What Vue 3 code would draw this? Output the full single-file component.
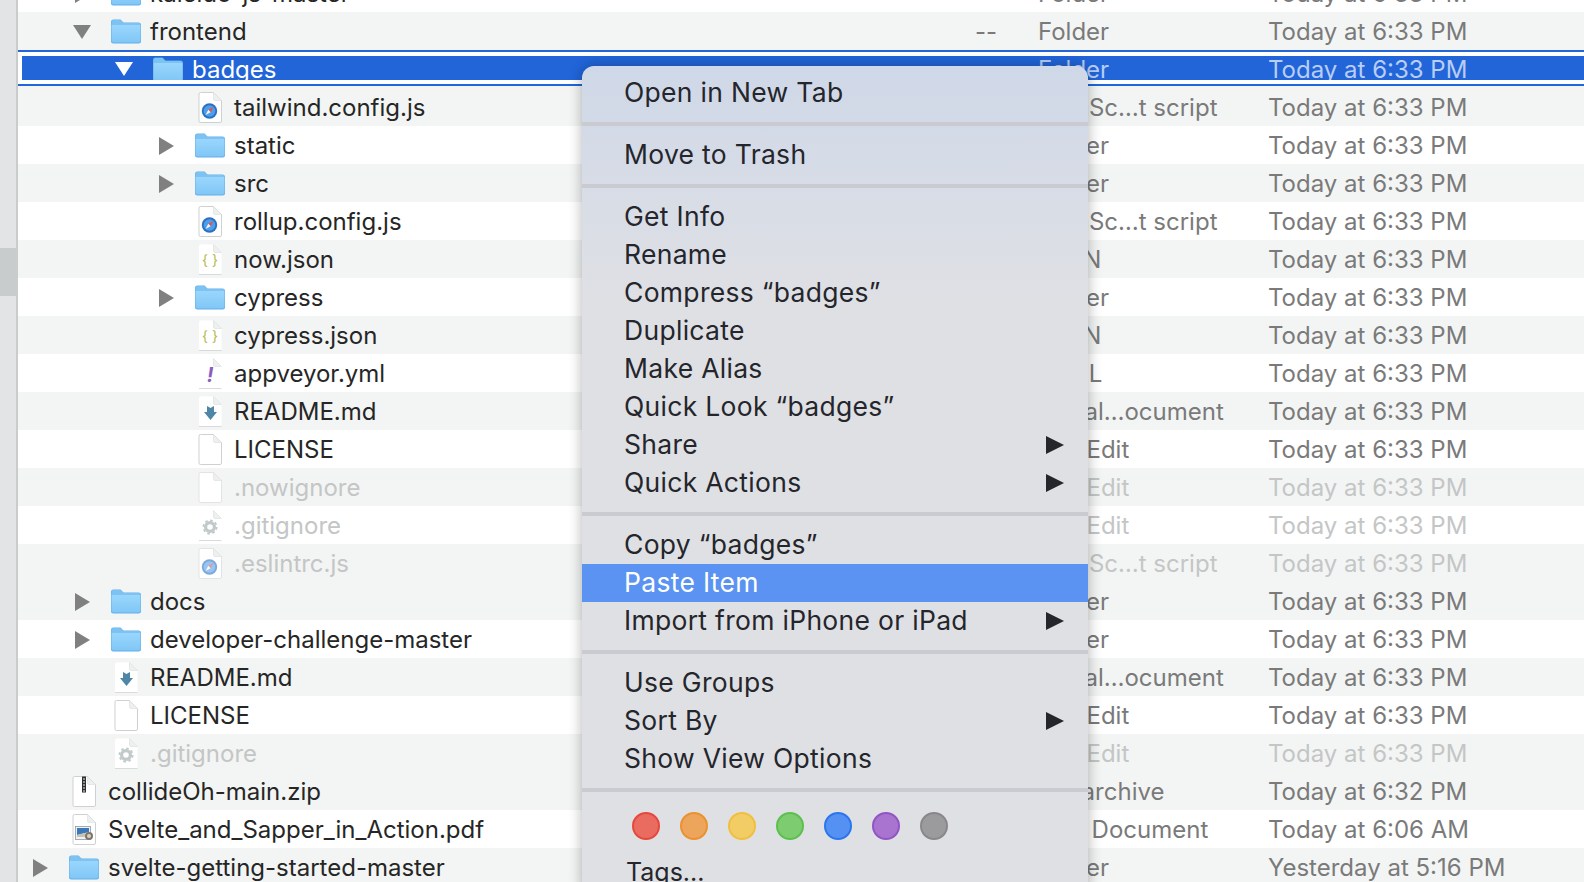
<script setup>
const F = "Today at 6:33 PM";

const rows = [
  { name: "kaleido-js-master", level: 1, icon: "folder", tri: "right", size: "--", kind: "Folder", date: F },
  { name: "frontend", level: 1, icon: "folder", tri: "down", size: "--", kind: "Folder", date: F, alt: true },
  { name: "badges", level: 2, icon: "folder", tri: "down", size: "--", kind: "Folder", date: F, selected: true },
  { name: "tailwind.config.js", level: 3, icon: "js", head: "Java", kind: "Sc…t script", date: F, alt: true, afterSel: true },
  { name: "static", level: 3, icon: "folder", tri: "right", size: "--", kind: "Folder", date: F },
  { name: "src", level: 3, icon: "folder", tri: "right", size: "--", kind: "Folder", date: F, alt: true },
  { name: "rollup.config.js", level: 3, icon: "js", head: "Java", kind: "Sc…t script", date: F },
  { name: "now.json", level: 3, icon: "json", head: "JSO", kind: "N", date: F, alt: true },
  { name: "cypress", level: 3, icon: "folder", tri: "right", size: "--", kind: "Folder", date: F },
  { name: "cypress.json", level: 3, icon: "json", head: "JSO", kind: "N", date: F, alt: true },
  { name: "appveyor.yml", level: 3, icon: "yml", head: "YAM", kind: "L", date: F },
  { name: "README.md", level: 3, icon: "md", head: "Visu", kind: "al…ocument", date: F, alt: true },
  { name: "LICENSE", level: 3, icon: "plain", kind: "TextEdit", date: F },
  { name: ".nowignore", level: 3, icon: "plain", kind: "TextEdit", date: F, alt: true, hidden: true },
  { name: ".gitignore", level: 3, icon: "gear", kind: "TextEdit", date: F, hidden: true },
  { name: ".eslintrc.js", level: 3, icon: "js", head: "Java", kind: "Sc…t script", date: F, alt: true, hidden: true },
  { name: "docs", level: 1, icon: "folder", tri: "right", size: "--", kind: "Folder", date: F, alt: true },
  { name: "developer-challenge-master", level: 1, icon: "folder", tri: "right", size: "--", kind: "Folder", date: F },
  { name: "README.md", level: 1, icon: "md", head: "Visu", kind: "al…ocument", date: F, alt: true },
  { name: "LICENSE", level: 1, icon: "plain", kind: "TextEdit", date: F },
  { name: ".gitignore", level: 1, icon: "gear", kind: "TextEdit", date: F, alt: true, hidden: true },
  { name: "collideOh-main.zip", level: 0, icon: "zip", kind: "ZIP archive", date: "Today at 6:32 PM", alt: true },
  { name: "Svelte_and_Sapper_in_Action.pdf", level: 0, icon: "pdf", kind: "PDF Document", date: "Today at 6:06 AM" },
  { name: "svelte-getting-started-master", level: 0, icon: "folder", tri: "right", size: "--", kind: "Folder", date: "Yesterday at 5:16 PM", alt: true },
];

const menu = [
  [{ label: "Open in New Tab" }],
  [{ label: "Move to Trash" }],
  [
    { label: "Get Info" },
    { label: "Rename" },
    { label: "Compress “badges”" },
    { label: "Duplicate" },
    { label: "Make Alias" },
    { label: "Quick Look “badges”" },
    { label: "Share", sub: true },
    { label: "Quick Actions", sub: true },
  ],
  [
    { label: "Copy “badges”" },
    { label: "Paste Item", active: true },
    { label: "Import from iPhone or iPad", sub: true },
  ],
  [
    { label: "Use Groups" },
    { label: "Sort By", sub: true },
    { label: "Show View Options" },
  ],
];

const tags = [
  { fill: "#ea6b60", line: "#e5483c" },
  { fill: "#eda55b", line: "#ea9130" },
  { fill: "#f2cd66", line: "#f1bf3f" },
  { fill: "#7dcd70", line: "#5cbf4e" },
  { fill: "#5591f2", line: "#2b76ee" },
  { fill: "#a874cf", line: "#9255c4" },
  { fill: "#9b9b9e", line: "#88888b" },
];

const bordered = ["plain", "js", "zip", "pdf"];

function indent(row) {
  return row.selected ? 11 + 42 * row.level + "px" : 15 + 42 * row.level + "px";
}
</script>

<template>
  <div class="finder">
    <div class="sidebar">
      <div class="sidebar-thumb"></div>
    </div>
    <div class="list">
      <div
        v-for="(row, i) in rows"
        :key="i"
        class="row"
        :class="{ alt: row.alt, selected: row.selected, 'after-sel': row.afterSel, faded: row.hidden }"
      >
        <div class="row-inner">
          <div class="name" :style="{ paddingLeft: indent(row) }">
            <span class="tri-box">
              <svg v-if="row.tri === 'right'" class="tri" width="20" height="20" viewBox="0 0 20 20">
                <path d="M3 1L18 10L3 19Z" />
              </svg>
              <svg v-if="row.tri === 'down'" class="tri" width="20" height="20" viewBox="0 0 20 20">
                <path d="M1 3H19L10 17Z" />
              </svg>
            </span>
            <span class="icon-box">
              <svg v-if="row.icon === 'folder'" width="30" height="25" viewBox="0 0 30 25">
                <defs>
                  <linearGradient id="folder-front" x1="0" y1="0" x2="0" y2="1">
                    <stop offset="0" stop-color="#9ad6fc" />
                    <stop offset="1" stop-color="#80c7f7" />
                  </linearGradient>
                </defs>
                <path d="M0 3Q0 0.5 2.5 0.5H9.5L12.5 3.5H27.5Q30 3.5 30 6V22Q30 24.5 27.5 24.5H2.5Q0 24.5 0 22Z" fill="#62aee8" />
                <path d="M0.5 6H29.5V21.5Q29.5 23.5 27.5 23.5H2.5Q0.5 23.5 0.5 21.5Z" fill="url(#folder-front)" />
                <path d="M0.5 3Q0.5 1 2.5 1H9.3L12.3 4H27.5Q29.5 4 29.5 6H0.5Z" fill="#7cc3f4" />
              </svg>
              <svg v-else class="file" width="24" height="31" viewBox="0 0 24 31">
                <path
                  class="page"
                  :class="{ edged: bordered.includes(row.icon) }"
                  d="M1 2Q1 0.5 2.5 0.5H15.5L23.5 8.5V29Q23.5 30.5 22 30.5H2.5Q1 30.5 1 29Z"
                />
                <path v-if="!bordered.includes(row.icon)" class="page-foot" d="M1 30.5H23.5" />
                <path class="fold" d="M15.5 0.5L23.5 8.5H17Q15.5 8.5 15.5 7Z" />
                <g class="glyphs">
                  <g v-if="row.icon === 'js'">
                    <circle cx="11.5" cy="19" r="7.7" fill="#2a70c4" />
                    <circle cx="11.5" cy="19" r="5.8" fill="#4f9fe8" />
                    <path d="M15.5 15L12.7 20.2L10.3 17.8Z" fill="#e5524a" />
                    <path d="M7.5 23L10.3 17.8L12.7 20.2Z" fill="#f2f4f7" />
                  </g>
                  <text v-if="row.icon === 'json'" x="12" y="21" class="glyph-json">{ }</text>
                  <text v-if="row.icon === 'yml'" x="12" y="24" class="glyph-yml">!</text>
                  <path v-if="row.icon === 'md'" d="M9 10L12.5 12L16 10V16H19L12.5 24L6 16H9Z" fill="#4f86a6" />
                  <g v-if="row.icon === 'gear'">
                    <circle cx="12" cy="17" r="4.4" fill="none" stroke="#98a6a8" stroke-width="3.2" />
                    <circle cx="12" cy="17" r="6.6" fill="none" stroke="#98a6a8" stroke-width="1.8" stroke-dasharray="2.6 2.58" />
                  </g>
                  <g v-if="row.icon === 'zip'">
                    <rect x="10" y="0.5" width="4" height="16" fill="#2e2e2e" />
                    <path d="M11 3H13M11 6H13M11 9H13M11 12H13M11 15H13" stroke="#eee" stroke-width="1" />
                  </g>
                  <g v-if="row.icon === 'pdf'">
                    <rect x="3.5" y="12.5" width="15" height="13" fill="#eef1f5" stroke="#8f98a2" stroke-width="0.8" />
                    <path d="M5 14H17V18L5 21Z" fill="#3f78b8" />
                    <path d="M5 21L13 19V23H5Z" fill="#c9c2ad" />
                    <circle cx="17" cy="22" r="4" fill="#7d766b" />
                    <circle cx="17" cy="22" r="2" fill="#d8d2c4" />
                  </g>
                </g>
              </svg>
            </span>
            <span class="label">{{ row.name }}</span>
          </div>
          <div class="size">{{ row.size }}</div>
          <div class="kind"><span v-if="row.head" class="kind-head">{{ row.head }}</span>{{ row.kind }}</div>
          <div class="date">{{ row.date }}</div>
        </div>
      </div>
    </div>

    <div class="menu">
      <template v-for="(group, g) in menu" :key="g">
        <div v-if="g > 0" class="sep"></div>
        <div
          v-for="item in group"
          :key="item.label"
          class="item"
          :class="{ active: item.active }"
        >
          <span>{{ item.label }}</span>
          <svg v-if="item.sub" class="sub" width="20" height="20" viewBox="0 0 20 20">
            <path d="M1 1L19 10L1 19Z" />
          </svg>
        </div>
      </template>
      <div class="sep"></div>
      <div class="tags">
        <span
          v-for="t in tags"
          :key="t.fill"
          class="tag"
          :style="{ background: t.fill, borderColor: t.line }"
        ></span>
      </div>
      <div class="tags-label">Tags...</div>
    </div>
  </div>
</template>

<style>
html,
body {
  margin: 0;
  background: #fff;
}
</style>

<style scoped>
.finder {
  position: relative;
  display: flex;
  width: 1584px;
  height: 882px;
  overflow: hidden;
  font-family: Inter, "Liberation Sans", sans-serif;
  font-size: 24px;
  color: #262626;
}
.sidebar {
  width: 16px;
  flex-shrink: 0;
  background: #e2e4e5;
  border-right: 2px solid #c9cbcc;
  position: relative;
}
.sidebar-thumb {
  position: absolute;
  left: 0;
  right: -2px;
  top: 248px;
  height: 48px;
  background: #c8cccc;
}
.list {
  flex: 1;
  margin-top: -26px;
}
.row {
  height: 38px;
  background: #fff;
}
.row.alt {
  background: #f3f5f4;
}
.row.after-sel {
  height: 40px;
  padding-top: 2px;
  box-sizing: border-box;
}
.row-inner {
  display: grid;
  grid-template-columns: 919px 101px 230px 1fr;
  align-items: center;
  height: 38px;
  line-height: 38px;
}
.row.selected {
  box-sizing: border-box;
  height: 36px;
  border-top: 2px solid #2165d9;
  border-bottom: 2px solid #2165d9;
  padding: 4px 0 4px 4px;
}
.row.selected .row-inner {
  height: 24px;
  grid-template-columns: 915px 101px 230px 1fr;
  background: #2165d9;
  overflow: hidden;
  color: #fff;
  line-height: 24px;
}
.row.selected .kind,
.row.selected .date,
.row.selected .size {
  padding-top: 2px;
  color: #b9cdf5;
}
.row.selected .label {
  padding-top: 2px;
}
.row.selected .tri path {
  fill: #fff;
}
.name {
  display: flex;
  align-items: center;
  min-width: 0;
}
.tri-box {
  width: 36px;
  display: flex;
  flex-shrink: 0;
}
.tri {
  margin-left: -3px;
}
.tri path {
  fill: #808080;
}
.icon-box {
  width: 30px;
  display: flex;
  justify-content: center;
  flex-shrink: 0;
}
.label {
  margin-left: 9px;
  padding-top: 1px;
  white-space: nowrap;
}
.size {
  text-align: right;
  padding: 1px 41px 0 0;
  color: #7a7a7a;
}
.kind,
.date {
  padding-top: 1px;
  color: #7a7a7a;
  white-space: nowrap;
}
.kind-head {
  letter-spacing: -0.7px;
}
.page {
  fill: #fff;
}
.page.edged {
  stroke: #cfd1d1;
}
.page-foot {
  stroke: #d9dbdb;
  fill: none;
}
.fold {
  fill: #eef0f0;
  stroke: #dcdede;
  stroke-width: 0.6;
}
.glyph-json {
  font-size: 14px;
  fill: #b5b84a;
  text-anchor: middle;
}
.glyph-yml {
  font-size: 20px;
  font-style: italic;
  font-weight: 700;
  fill: #8a5cc0;
  text-anchor: middle;
}
.faded .label,
.faded .kind,
.faded .date {
  color: #c4c6c6;
}
.faded .glyphs {
  opacity: 0.6;
}
.faded .page.edged {
  stroke: #e2e4e4;
}
.menu {
  position: absolute;
  left: 582px;
  top: 66px;
  width: 506px;
  height: 830px;
  box-sizing: border-box;
  padding-top: 8px;
  border-radius: 12px;
  background: linear-gradient(#cfd8e8, #dfe0e4 240px);
  box-shadow: 0 0 14px rgba(0, 0, 0, 0.3);
  color: #24262c;
  font-size: 26.5px;
  letter-spacing: 0.3px;
}
.item {
  display: flex;
  align-items: center;
  justify-content: space-between;
  box-sizing: border-box;
  height: 38px;
  padding: 0 23px 2px 42px;
}
.item .sub {
  margin-top: 2px;
}
.item.active {
  background: #5a93f2;
  color: #fff;
}
.sub path {
  fill: #24262c;
}
.sep {
  height: 4px;
  margin: 10px 0;
  background: #c9cbd0;
}
.tags {
  display: flex;
  gap: 20px;
  padding: 10px 0 0 50px;
}
.tag {
  width: 28px;
  height: 28px;
  box-sizing: border-box;
  border: 2px solid;
  border-radius: 50%;
}
.tags-label {
  margin-top: 13px;
  padding-left: 44px;
  line-height: 38px;
  font-size: 25px;
  letter-spacing: 0;
}
</style>
